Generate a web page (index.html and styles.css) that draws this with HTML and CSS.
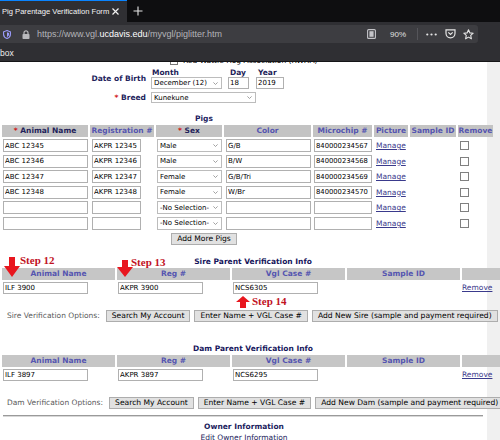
FILE: index.html
```html
<!DOCTYPE html>
<html lang="en">
<head>
    <meta charset="UTF-8">
    <meta name="viewport" content="width=device-width, initial-scale=1.0">
    <title>Pig Parentage Verification Form</title>
    <link rel="stylesheet" href="styles.css">
</head>
<body>
    <div class="tabbar">
        <div class="tab">
            <span>Pig Parentage Verification Form</span>
            <svg class="tab-close" width="7" height="7" viewBox="0 0 7 7"><path d="M0.5 0.5L6.5 6.5M6.5 0.5L0.5 6.5" stroke="#f2f2f2" stroke-width="1.2"/></svg>
        </div>
        <svg class="new-tab" width="10" height="10" viewBox="0 0 10 10"><path d="M5 0.5V9.5M0.5 5H9.5" stroke="#e6e6e6" stroke-width="1.1"/></svg>
    </div>

    <div class="toolbar">
        <div class="urlbar">
            <svg class="shield" width="8" height="9" viewBox="0 0 8 9"><path d="M4 0.6L7.4 1.8V4.4C7.4 6.4 5.6 7.8 4 8.4C2.4 7.8 0.6 6.4 0.6 4.4V1.8Z" fill="none" stroke="#9d9dff" stroke-width="1.1"/><path d="M4 2.2L6 2.9V4.5C6 5.6 5 6.5 4 6.9Z" fill="#9d9dff"/></svg>
            <svg class="lock" width="8" height="9" viewBox="0 0 8 9"><path d="M2 4V2.8A2 2 0 0 1 6 2.8V4" fill="none" stroke="#b9b9bd" stroke-width="1.2"/><rect x="0.5" y="4" width="7" height="5" rx="0.8" fill="#b9b9bd"/></svg>
            <span class="url">https://www.vgl.<span class="host">ucdavis.edu</span>/myvgl/piglitter.htm</span>
            <span class="spacer"></span>
            <svg class="reader" width="9" height="10" viewBox="0 0 9 10"><rect x="0.6" y="0.6" width="7.8" height="8.8" rx="1" fill="none" stroke="#c4c4c8" stroke-width="1.1"/><rect x="2.4" y="2.2" width="4.2" height="5.6" fill="#c4c4c8"/></svg>
            <span class="zoom-level">90%</span>
            <span class="sep"></span>
            <svg class="dots" width="11" height="3" viewBox="0 0 11 3"><circle cx="1.3" cy="1.5" r="1.1" fill="#e6e6e6"/><circle cx="5.5" cy="1.5" r="1.1" fill="#e6e6e6"/><circle cx="9.7" cy="1.5" r="1.1" fill="#e6e6e6"/></svg>
            <svg class="pocket" width="11" height="10" viewBox="0 0 11 10"><path d="M1 0.8H10V4.3A4.5 4.5 0 0 1 1 4.3Z" fill="none" stroke="#e6e6e6" stroke-width="1.2"/><path d="M3.3 3.4L5.5 5.5L7.7 3.4" fill="none" stroke="#e6e6e6" stroke-width="1.2"/></svg>
            <svg class="star" width="11" height="11" viewBox="0 0 11 11"><path d="M5.5 0.8L6.9 3.9L10.2 4.2L7.7 6.4L8.4 9.8L5.5 8.1L2.6 9.8L3.3 6.4L0.8 4.2L4.1 3.9Z" fill="none" stroke="#e6e6e6" stroke-width="1.1" stroke-linejoin="round"/></svg>
        </div>
    </div>

    <div class="bookmarks">box</div>

    <div class="page">
        <div class="assoc"><span class="box"></span>Red Wattle Hog Association (RWHA)</div>

        <div class="form-row dob">
            <div class="row-label">Date of Birth</div>
            <div class="dob-fields">
                <div class="dob-field month">
                    <label>Month</label>
                    <div class="select"><span>December (12)</span><svg width="5" height="3" viewBox="0 0 5 3"><path d="M0.4 0.4L2.5 2.5L4.6 0.4" fill="none" stroke="#8a8a8a" stroke-width="0.8"/></svg></div>
                </div>
                <div class="dob-field day">
                    <label>Day</label>
                    <input class="field" type="text" value="18">
                </div>
                <div class="dob-field year">
                    <label>Year</label>
                    <input class="field" type="text" value="2019">
                </div>
            </div>
        </div>

        <div class="form-row breed">
            <div class="row-label"><span class="req">*</span> Breed</div>
            <div class="select breed-select"><span>Kunekune</span><svg width="5" height="3" viewBox="0 0 5 3"><path d="M0.4 0.4L2.5 2.5L4.6 0.4" fill="none" stroke="#8a8a8a" stroke-width="0.8"/></svg></div>
        </div>

        <div class="pigs-title">Pigs</div>
        <div class="pig-grid">
            <div class="th dark"><span class="req">*</span> Animal Name</div>
            <div class="th">Registration #</div>
            <div class="th dark"><span class="req">*</span> Sex</div>
            <div class="th">Color</div>
            <div class="th">Microchip #</div>
            <div class="th">Picture</div>
            <div class="th">Sample ID</div>
            <div class="th">Remove</div>

            <input class="field w-name" type="text" value="ABC 12345">
            <input class="field w-reg" type="text" value="AKPR 12345">
            <div class="select w-sex"><span>Male</span><svg width="5" height="3" viewBox="0 0 5 3"><path d="M0.4 0.4L2.5 2.5L4.6 0.4" fill="none" stroke="#8a8a8a" stroke-width="0.8"/></svg></div>
            <input class="field w-color" type="text" value="G/B">
            <input class="field w-chip" type="text" value="840000234567">
            <a class="manage" href="#">Manage</a>
            <span></span>
            <input class="remove-box" type="checkbox">

            <input class="field w-name" type="text" value="ABC 12346">
            <input class="field w-reg" type="text" value="AKPR 12346">
            <div class="select w-sex"><span>Male</span><svg width="5" height="3" viewBox="0 0 5 3"><path d="M0.4 0.4L2.5 2.5L4.6 0.4" fill="none" stroke="#8a8a8a" stroke-width="0.8"/></svg></div>
            <input class="field w-color" type="text" value="B/W">
            <input class="field w-chip" type="text" value="840000234568">
            <a class="manage" href="#">Manage</a>
            <span></span>
            <input class="remove-box" type="checkbox">

            <input class="field w-name" type="text" value="ABC 12347">
            <input class="field w-reg" type="text" value="AKPR 12347">
            <div class="select w-sex"><span>Female</span><svg width="5" height="3" viewBox="0 0 5 3"><path d="M0.4 0.4L2.5 2.5L4.6 0.4" fill="none" stroke="#8a8a8a" stroke-width="0.8"/></svg></div>
            <input class="field w-color" type="text" value="G/B/Tri">
            <input class="field w-chip" type="text" value="840000234569">
            <a class="manage" href="#">Manage</a>
            <span></span>
            <input class="remove-box" type="checkbox">

            <input class="field w-name" type="text" value="ABC 12348">
            <input class="field w-reg" type="text" value="AKPR 12348">
            <div class="select w-sex"><span>Female</span><svg width="5" height="3" viewBox="0 0 5 3"><path d="M0.4 0.4L2.5 2.5L4.6 0.4" fill="none" stroke="#8a8a8a" stroke-width="0.8"/></svg></div>
            <input class="field w-color" type="text" value="W/Br">
            <input class="field w-chip" type="text" value="840000234570">
            <a class="manage" href="#">Manage</a>
            <span></span>
            <input class="remove-box" type="checkbox">

            <input class="field w-name" type="text">
            <input class="field w-reg" type="text">
            <div class="select w-sex"><span>-No Selection-</span><svg width="5" height="3" viewBox="0 0 5 3"><path d="M0.4 0.4L2.5 2.5L4.6 0.4" fill="none" stroke="#8a8a8a" stroke-width="0.8"/></svg></div>
            <input class="field w-color" type="text">
            <input class="field w-chip" type="text">
            <a class="manage" href="#">Manage</a>
            <span></span>
            <input class="remove-box" type="checkbox">

            <input class="field w-name" type="text">
            <input class="field w-reg" type="text">
            <div class="select w-sex"><span>-No Selection-</span><svg width="5" height="3" viewBox="0 0 5 3"><path d="M0.4 0.4L2.5 2.5L4.6 0.4" fill="none" stroke="#8a8a8a" stroke-width="0.8"/></svg></div>
            <input class="field w-color" type="text">
            <input class="field w-chip" type="text">
            <a class="manage" href="#">Manage</a>
            <span></span>
            <input class="remove-box" type="checkbox">
        </div>
        <div class="add-more"><button class="btn">Add More Pigs</button></div>

        <!-- Sire -->
        <div class="section-title sire-title">Sire Parent Verification Info</div>
        <div class="parent-grid">
            <div class="th">Animal Name</div>
            <div class="th">Reg #</div>
            <div class="th">Vgl Case #</div>
            <div class="th">Sample ID</div>
            <div class="th"></div>
            <input class="field w-parent" type="text" value="ILF 3900">
            <input class="field w-parent" type="text" value="AKPR 3900">
            <input class="field w-parent" type="text" value="NCS6305">
            <span></span>
            <a class="remove-link" href="#">Remove</a>
        </div>
        <div class="options">
            <span class="options-label">Sire Verification Options:</span>
            <button class="btn">Search My Account</button>
            <button class="btn">Enter Name + VGL Case #</button>
            <button class="btn">Add New Sire (sample and payment required)</button>
        </div>

        <!-- Dam -->
        <div class="section-title dam-title">Dam Parent Verification Info</div>
        <div class="parent-grid">
            <div class="th">Animal Name</div>
            <div class="th">Reg #</div>
            <div class="th">Vgl Case #</div>
            <div class="th">Sample ID</div>
            <div class="th"></div>
            <input class="field w-parent" type="text" value="ILF 3897">
            <input class="field w-parent" type="text" value="AKPR 3897">
            <input class="field w-parent" type="text" value="NCS6295">
            <span></span>
            <a class="remove-link" href="#">Remove</a>
        </div>
        <div class="options">
            <span class="options-label">Dam Verification Options:</span>
            <button class="btn">Search My Account</button>
            <button class="btn">Enter Name + VGL Case #</button>
            <button class="btn">Add New Dam (sample and payment required)</button>
        </div>

        <div class="divider"></div>
        <div class="owner-title">Owner Information</div>
        <div class="owner-edit">Edit Owner Information</div>

        <!-- tutorial annotations -->
        <svg class="arrow arrow-12" width="16" height="20" viewBox="0 0 16 20"><polygon points="5,0 11,0 11,9 16,9 8,20 0,9 5,9" fill="#e8161e"/></svg>
        <span class="step step-12">Step 12</span>
        <svg class="arrow arrow-13" width="16" height="17" viewBox="0 0 16 17"><polygon points="5,0 11,0 11,7 16,7 8,17 0,7 5,7" fill="#e8161e"/></svg>
        <span class="step step-13">Step 13</span>
        <svg class="arrow arrow-14" width="14" height="12" viewBox="0 0 14 12"><polygon points="7,0 14,6 10,6 10,12 4,12 4,6 0,6" fill="#e8161e"/></svg>
        <span class="step step-14">Step 14</span>
    </div>
</body>
</html>
```

FILE: styles.css
```css
* {
    box-sizing: border-box;
}

body {
    margin: 0;
    width: 500px;
    height: 440px;
    overflow: hidden;
    background: #fff;
    font-family: "DejaVu Sans", Verdana, sans-serif;
}

/* ---- browser chrome ---- */

.tabbar {
    height: 22px;
    background: #0e0e10;
    display: flex;
}

.tab {
    width: 127px;
    background: #2f2f33;
    border-top: 1px solid #0a84ff;
    display: flex;
    align-items: center;
    justify-content: space-between;
    padding: 0 8px 0 2px;
    font-family: "Liberation Sans", Arial, sans-serif;
    font-size: 7.6px;
    color: #f4f4f4;
    white-space: nowrap;
}

.new-tab {
    align-self: center;
    margin-left: 6px;
}

.toolbar {
    height: 24px;
    background: #2f2f33;
    padding: 3px 22px 3px 0;
}

.urlbar {
    height: 18px;
    background: #3d3d41;
    border-radius: 0 3px 3px 0;
    display: flex;
    align-items: center;
    padding: 0 4px 0 3px;
    font-family: "Liberation Sans", Arial, sans-serif;
    font-size: 9px;
    color: #b4b4b8;
    white-space: nowrap;
}

.lock {
    margin-left: 11px;
}

.url {
    margin-left: 7px;
}

.url .host {
    color: #ffffff;
}

.spacer {
    flex: 1;
}

.zoom-level {
    margin-left: 14px;
    font-size: 8px;
    color: #e0e0e0;
}

.sep {
    width: 1px;
    height: 12px;
    background: #55555a;
    margin: 0 8px 0 11px;
}

.pocket {
    margin-left: 8px;
}

.star {
    margin-left: 7px;
}

.bookmarks {
    height: 16px;
    background: #2f2f33;
    border-bottom: 1px solid #151517;
    font-family: "Liberation Sans", Arial, sans-serif;
    font-size: 8.5px;
    line-height: 15px;
    color: #eeeeee;
}

/* ---- page ---- */

.page {
    position: relative;
    height: 378px;
    overflow: hidden;
    background: linear-gradient(to right, #ffffff 487px, #f0f0f0 487px);
    font-size: 7.5px;
    color: #000;
}

.assoc {
    margin-top: -6px;
    height: 10px;
    line-height: 10px;
    padding-left: 170px;
    display: flex;
    align-items: center;
    white-space: nowrap;
}

.assoc .box {
    width: 8px;
    height: 8px;
    border: 1px solid #777;
    margin-right: 5px;
}

.form-row {
    display: flex;
    align-items: center;
}

.row-label {
    width: 146px;
    margin-right: 5px;
    text-align: right;
    font-weight: bold;
    color: #23235c;
}

.req {
    color: #d01414;
}

.dob {
    margin-top: 2px;
}

.dob-fields {
    display: flex;
}

.dob-field label {
    display: block;
    height: 9px;
    line-height: 9px;
    padding-left: 1px;
    font-weight: bold;
    color: #1d1d58;
}

.month {
    width: 71px;
    margin-right: 6px;
}

.day {
    width: 21px;
    margin-right: 7px;
}

.year {
    width: 28px;
}

.day label,
.year label {
    padding-left: 2px;
}

.field {
    display: block;
    width: 100%;
    height: 12px;
    margin: 0;
    padding: 0 1px;
    border: 1px solid #b0b0b0;
    background: #fff;
    font-family: "DejaVu Sans", Verdana, sans-serif;
    font-size: 7px;
    color: #000;
    outline: none;
}

.select {
    display: flex;
    align-items: center;
    justify-content: space-between;
    height: 12px;
    padding: 0 3px 0 2px;
    border: 1px solid #bcbcbc;
    background: #fff;
    font-size: 7px;
    white-space: nowrap;
}

.breed {
    margin-top: 3px;
}

.breed-select {
    width: 105px;
    height: 11px;
}

.pigs-title {
    width: 408px;
    margin-top: 11px;
    height: 10px;
    line-height: 10px;
    text-align: center;
    font-weight: bold;
    color: #1c1c5e;
}

.th {
    height: 12px;
    line-height: 12px;
    background: #c3c3c3;
    text-align: center;
    font-weight: bold;
    color: #5555b0;
    white-space: nowrap;
}

.th.dark {
    color: #1f1f5a;
}

.pig-grid {
    display: grid;
    grid-template-columns: 86px 64px 66px 87px 59px 34px 46px 35px;
    grid-template-rows: 14px repeat(6, 15.6px);
    column-gap: 2px;
    align-items: start;
    margin: 1px 0 0 2px;
}

.pig-grid .field,
.pig-grid .select {
    height: 13px;
}

.w-name {
    width: 85px;
    margin-left: 1px;
}

.w-reg {
    width: 49px;
    margin-left: 2px;
}

.w-sex {
    width: 65px;
    margin-left: 1px;
}

.w-color {
    width: 85px;
    margin-left: 2px;
}

.w-chip {
    width: 58px;
    margin-left: 1px;
    font-size: 6.8px;
}

.manage,
.remove-link {
    display: block;
    color: #3a3a8c;
    text-decoration: underline;
}

.manage {
    margin-left: 2px;
    line-height: 13px;
}

.remove-box {
    appearance: none;
    width: 9px;
    height: 9px;
    margin: 2px 0 0 2px;
    border: 1px solid #808080;
    background: #fff;
}

.add-more {
    width: 408px;
    margin-top: 0.4px;
    text-align: center;
}

.btn {
    height: 12px;
    margin: 0;
    padding: 0 5px;
    border: 1px solid #adadad;
    background: #e1e1e1;
    font-family: "DejaVu Sans", Verdana, sans-serif;
    font-size: 7.6px;
    line-height: 10px;
    color: #000;
    white-space: nowrap;
}

.section-title {
    width: 506px;
    height: 10px;
    line-height: 10px;
    text-align: center;
    font-weight: bold;
    color: #16165c;
    white-space: nowrap;
}

.sire-title {
    margin-top: 12px;
}

.dam-title {
    margin-top: 22px;
}

.parent-grid {
    display: grid;
    grid-template-columns: repeat(5, 113px);
    grid-template-rows: 12px 12px;
    gap: 2px;
    align-items: center;
    width: max-content;
    margin: 1px 0 0 2px;
}

.parent-grid .th {
    background: #c6c6c6;
}

.w-parent {
    width: 85px;
    margin-left: 1px;
}

.options {
    display: flex;
    align-items: center;
    gap: 4px;
    height: 12px;
    margin-top: 16px;
    padding-left: 7px;
    white-space: nowrap;
}

.options-label {
    margin-right: 2px;
    color: #5a5a5a;
}

.divider {
    width: 480px;
    height: 2px;
    margin: 6px 0 0 3px;
    border-top: 1px solid #9a9a9a;
    border-bottom: 1px solid #d8d8d8;
}

.owner-title,
.owner-edit {
    width: 488px;
    height: 10px;
    line-height: 10px;
    text-align: center;
    color: #1c1c5c;
}

.owner-title {
    margin-top: 5px;
    font-weight: bold;
}

.owner-edit {
    margin-top: 1px;
}

/* ---- red tutorial marks laid over the form ---- */

.arrow,
.step {
    position: absolute;
}

.step {
    font-family: "Liberation Serif", "Times New Roman", serif;
    font-weight: bold;
    font-size: 11px;
    line-height: 11px;
    color: #c1121f;
    white-space: nowrap;
}

.arrow-12 { left: 4px; top: 195px; }
.step-12 { left: 20px; top: 193px; }
.arrow-13 { left: 117px; top: 198px; }
.step-13 { left: 131px; top: 195px; }
.arrow-14 { left: 236px; top: 234px; }
.step-14 { left: 252px; top: 234px; }
```
